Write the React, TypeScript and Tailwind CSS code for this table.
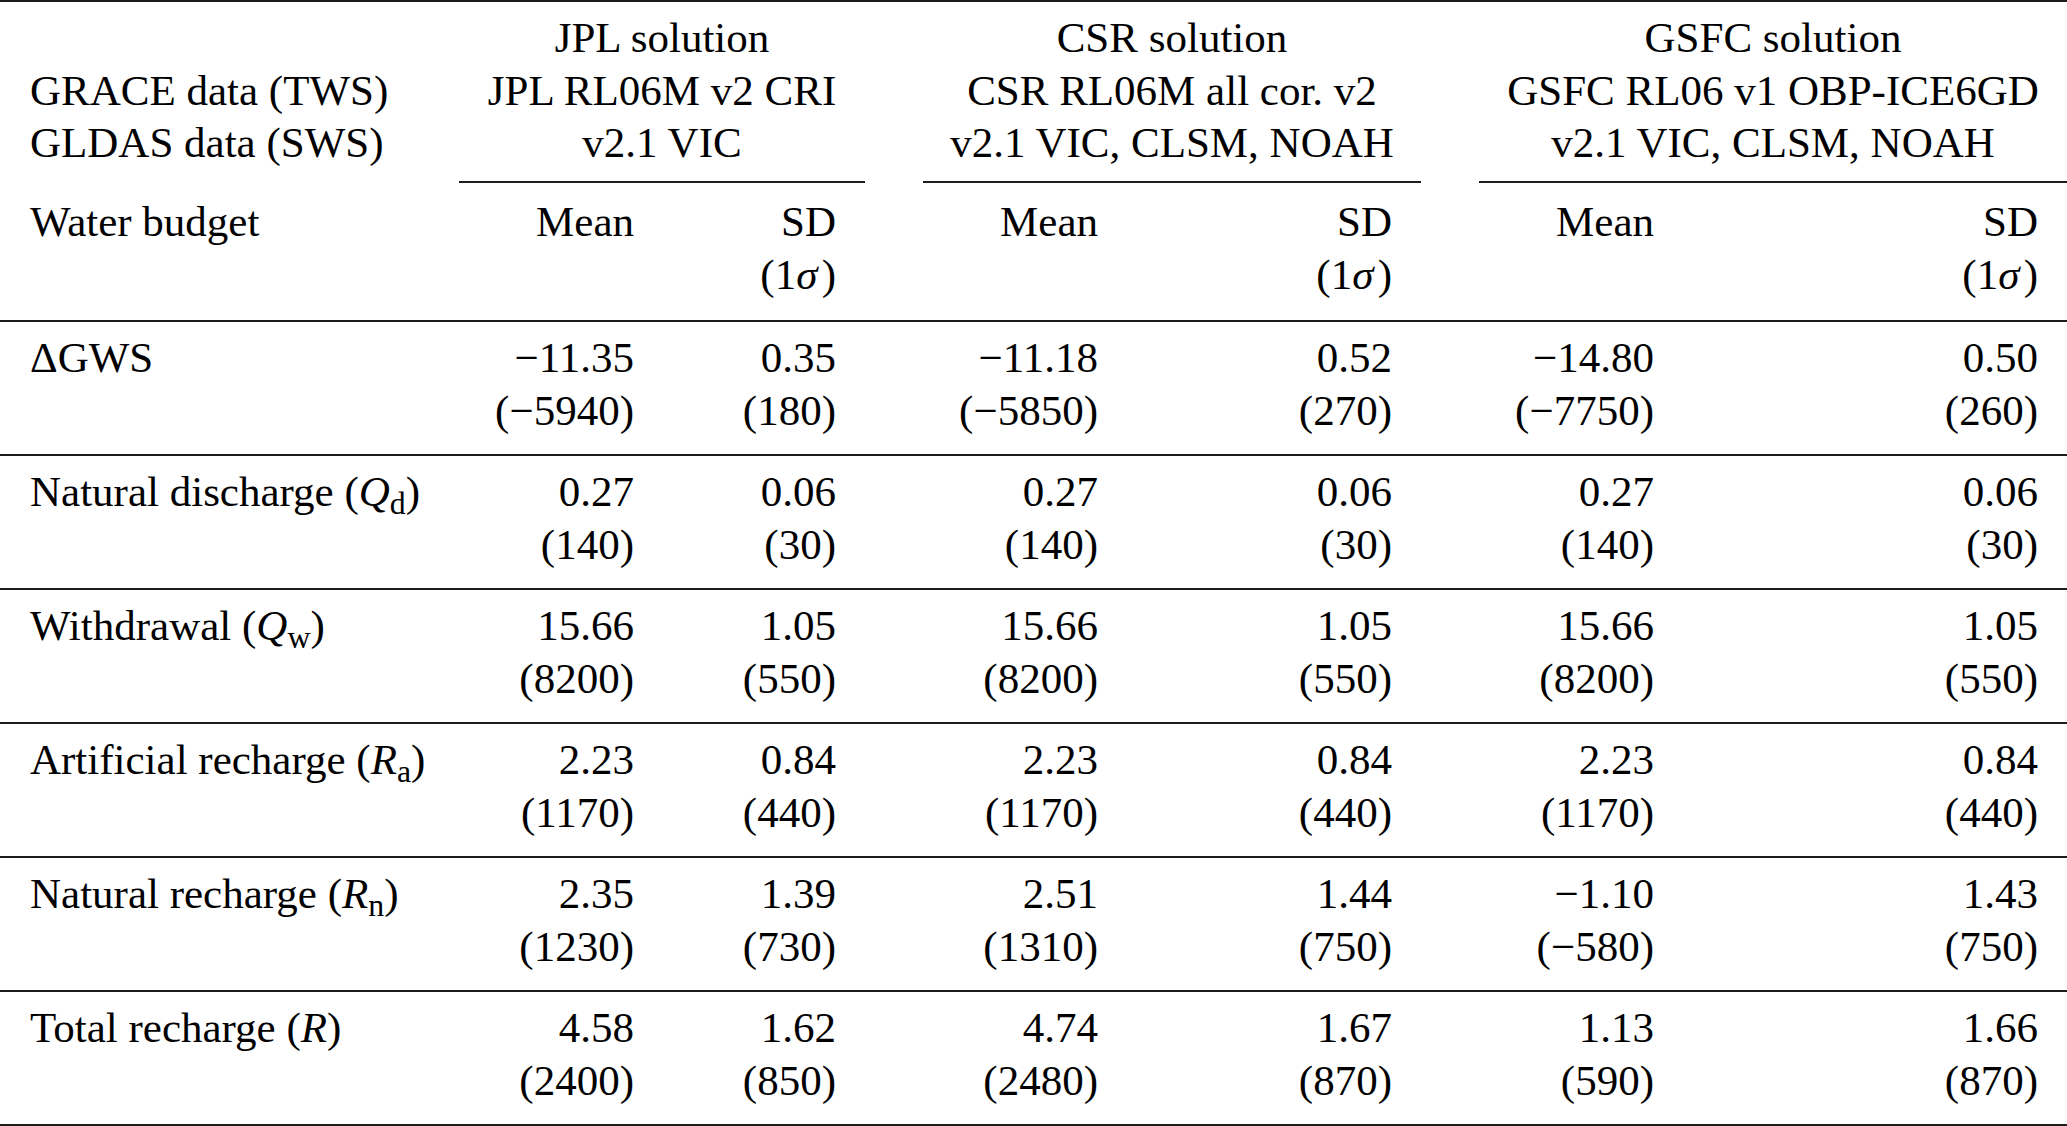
import React from "react";

type Cell = [string, string];
type Row = { label: React.ReactNode; groups: [Cell, Cell][] };

const Sym = ({ s, sub }: { s: string; sub?: string }) => (
  <>
    <i>{s}</i>
    {sub ? <sub className="text-[0.74em]">{sub}</sub> : null}
  </>
);

const rows: Row[] = [
  {
    label: <>ΔGWS</>,
    groups: [
      [["−11.35", "(−5940)"], ["0.35", "(180)"]],
      [["−11.18", "(−5850)"], ["0.52", "(270)"]],
      [["−14.80", "(−7750)"], ["0.50", "(260)"]],
    ],
  },
  {
    label: (
      <>
        Natural discharge (<Sym s="Q" sub="d" />)
      </>
    ),
    groups: [
      [["0.27", "(140)"], ["0.06", "(30)"]],
      [["0.27", "(140)"], ["0.06", "(30)"]],
      [["0.27", "(140)"], ["0.06", "(30)"]],
    ],
  },
  {
    label: (
      <>
        Withdrawal (<Sym s="Q" sub="w" />)
      </>
    ),
    groups: [
      [["15.66", "(8200)"], ["1.05", "(550)"]],
      [["15.66", "(8200)"], ["1.05", "(550)"]],
      [["15.66", "(8200)"], ["1.05", "(550)"]],
    ],
  },
  {
    label: (
      <>
        Artificial recharge (<Sym s="R" sub="a" />)
      </>
    ),
    groups: [
      [["2.23", "(1170)"], ["0.84", "(440)"]],
      [["2.23", "(1170)"], ["0.84", "(440)"]],
      [["2.23", "(1170)"], ["0.84", "(440)"]],
    ],
  },
  {
    label: (
      <>
        Natural recharge (<Sym s="R" sub="n" />)
      </>
    ),
    groups: [
      [["2.35", "(1230)"], ["1.39", "(730)"]],
      [["2.51", "(1310)"], ["1.44", "(750)"]],
      [["−1.10", "(−580)"], ["1.43", "(750)"]],
    ],
  },
  {
    label: (
      <>
        Total recharge (<Sym s="R" />)
      </>
    ),
    groups: [
      [["4.58", "(2400)"], ["1.62", "(850)"]],
      [["4.74", "(2480)"], ["1.67", "(870)"]],
      [["1.13", "(590)"], ["1.66", "(870)"]],
    ],
  },
];

const groupWidths = ["w-[464px]", "w-[556px]", "w-[646px]"];

const heads: [string, string, string][] = [
  ["JPL solution", "JPL RL06M v2 CRI", "v2.1 VIC"],
  ["CSR solution", "CSR RL06M all cor. v2", "v2.1 VIC, CLSM, NOAH"],
  ["GSFC solution", "GSFC RL06 v1 OBP-ICE6GD", "v2.1 VIC, CLSM, NOAH"],
];

function Rule() {
  return <div className="h-[2px] bg-[#1c1c1c]" />;
}

export default function App() {
  return (
    <div className="w-[2067px] h-[1126px] overflow-hidden bg-white text-black font-['Liberation_Serif','Times_New_Roman',serif] text-[43px] leading-[52.5px]">
      <div className="w-[2096px]">
        <Rule />
        {/* Header part A */}
        <div className="flex">
          <div className="w-[430px] shrink-0 pl-[30px] pt-[10px]">
            <div>&nbsp;</div>
            <div className="whitespace-nowrap">GRACE data (TWS)</div>
            <div className="whitespace-nowrap">GLDAS data (SWS)</div>
          </div>
          {heads.map((h, i) => (
            <div key={i} className={`${groupWidths[i]} shrink-0 pt-[10px] flex flex-col`}>
              {h.map((t, j) => (
                <div key={j} className="text-center whitespace-nowrap">
                  {t}
                </div>
              ))}
              <div className="mx-[29px] mt-[11.5px] h-[1.5px] bg-[#1c1c1c]" />
            </div>
          ))}
        </div>
        {/* Header part B */}
        <div className="flex pt-[13.5px] pb-[19px]">
          <div className="w-[430px] shrink-0 pl-[30px]">Water budget</div>
          {groupWidths.map((w, i) => (
            <div key={i} className={`${w} shrink-0 flex`}>
              <div className="w-[204px] shrink-0 text-right">Mean</div>
              <div className="flex-1 text-right pr-[58px]">
                <div>SD</div>
                <div>
                  (1<i>σ</i>
                  <span className="ml-[0.1em]">)</span>
                </div>
              </div>
            </div>
          ))}
        </div>
        {/* Data rows */}
        {rows.map((r, ri) => (
          <div key={ri}>
            <Rule />
            <div className="flex pt-[10px] pb-[17px]">
              <div className="w-[430px] shrink-0 pl-[30px] whitespace-nowrap">{r.label}</div>
              {r.groups.map((g, gi) => (
                <div key={gi} className={`${groupWidths[gi]} shrink-0 flex`}>
                  <div className="w-[204px] shrink-0 text-right">
                    <div>{g[0][0]}</div>
                    <div>{g[0][1]}</div>
                  </div>
                  <div className="flex-1 text-right pr-[58px]">
                    <div>{g[1][0]}</div>
                    <div>{g[1][1]}</div>
                  </div>
                </div>
              ))}
            </div>
          </div>
        ))}
        <Rule />
      </div>
    </div>
  );
}
